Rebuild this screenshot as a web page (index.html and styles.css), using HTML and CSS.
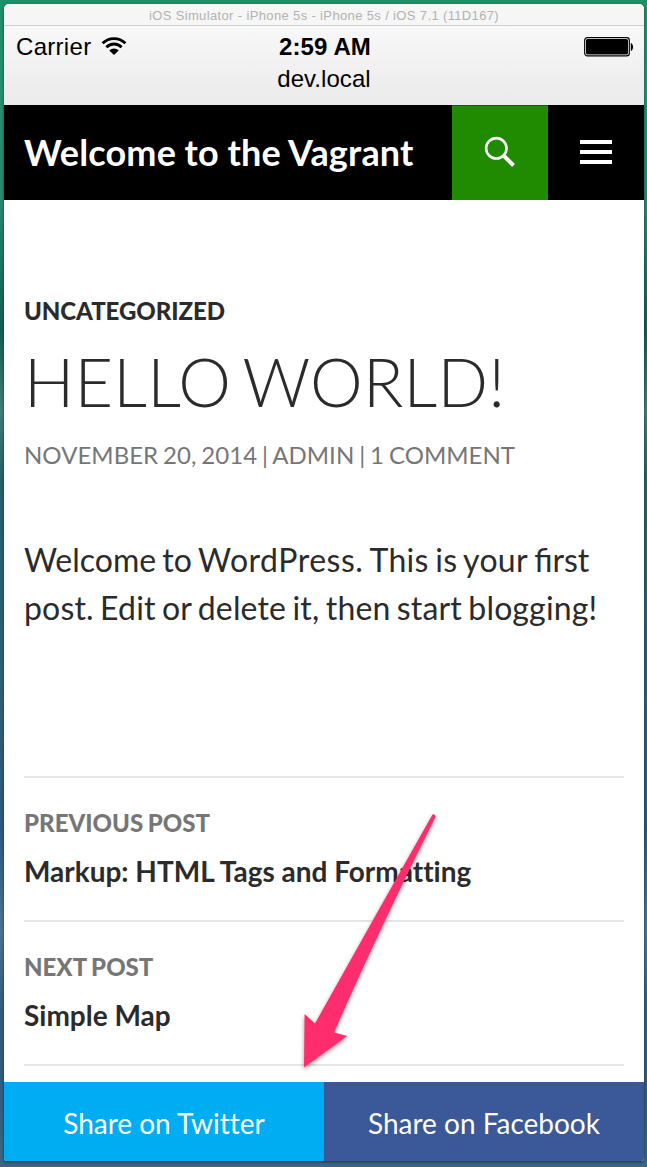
FILE: index.html
```html
<!DOCTYPE html>
<html lang="en">
<head>
<meta charset="utf-8">
<title>Welcome to the Vagrant</title>
<link rel="stylesheet" href="styles.css">
</head>
<body>
<div class="window">
  <div class="titlebar"><span class="titlebar-text">iOS Simulator - iPhone 5s - iPhone 5s / iOS 7.1 (11D167)</span></div>
  <div class="safari">
    <div class="status">
      <div class="carrier"><span class="carrier-name">Carrier</span>
        <svg class="wifi" width="26" height="20" viewBox="0 0 26 20"><g fill="none" stroke="#000" stroke-width="2.9"><path d="M1.6 7.3a16.2 16.2 0 0 1 22.8 0"/><path d="M5.4 11.2a10.8 10.8 0 0 1 15.2 0"/></g><path d="M8.3 14.4a6.6 6.6 0 0 1 9.4 0L13 19z"/></svg>
      </div>
      <span class="time">2:59 AM</span>
      <svg class="battery" width="50" height="20" viewBox="0 0 50 20"><rect x=".7" y=".7" width="44.6" height="18.2" rx="2.6" fill="#fff" stroke="#000" stroke-width="1.2"/><rect x="2" y="2" width="42" height="15.6" rx="1.5"/><path d="M46.8 6c3 1 3 7 0 8z"/></svg>
    </div>
    <div class="address"><span class="host">dev.local</span></div>
  </div>
  <header class="header">
    <h1 class="site-title"><span class="site-name">Welcome to the Vagrant</span></h1>
    <div class="search"><svg width="34" height="34" viewBox="0 0 34 34" fill="none" stroke="#fff"><circle cx="13.3" cy="13.3" r="10.2" stroke-width="2.6"/><path d="M20.5 20.5L30.500 30.500" stroke-width="4"/></svg></div>
    <div class="menu"><i class="bar"></i><i class="bar"></i><i class="bar"></i></div>
  </header>
  <main class="content">
    <div class="category"><span class="cat-text">UNCATEGORIZED</span></div>
    <h2 class="entry-title"><span class="entry-text">HELLO WORLD!</span></h2>
    <div class="meta"><span class="meta-text">NOVEMBER 20, 2014 | ADMIN | 1 COMMENT</span></div>
    <p class="copy"><span class="copy-one">Welcome to <span class="brand">WordPress.</span> <span class="loose">This is your</span> first</span><br><span class="copy-two">post. Edit or delete it, then start blogging!</span></p>
    <nav class="posts">
      <a class="post"><span class="label">PREVIOUS POST</span><span class="post-title">Markup: HTML Tags and Formatting</span></a>
      <a class="post"><span class="label">NEXT POST</span><span class="post-title">Simple Map</span></a>
    </nav>
  </main>
  <footer class="share">
    <a class="share-button twitter"><span class="share-text">Share on Twitter</span></a>
    <a class="share-button facebook"><span class="share-text">Share on Facebook</span></a>
  </footer>
</div>
<svg class="arrow" width="150" height="265" viewBox="0 0 150 265"><path d="M142.5 4.5Q143.800 3.900 144.800 5Q146 6 145 8Q88 122 44 222.500L57.300 226L14 257.500L14.600 204L25 213.500Q84 108 142.500 4.500Z" fill="#ff2d6e"/></svg>
</body>
</html>
```
FILE: styles.css
```css
* { box-sizing: border-box; }
body {
  margin: 0;
  height: 1167px;
  padding: 4px 3px 6px 4px;
  overflow: hidden;
  position: relative;
  font-family: Lato, sans-serif;
  color: #2b2b2b;
  background: linear-gradient(#1c9168 0, #239070 90px, #278a70 200px, #125e55 330px, #427d78 410px, #285f69 480px, #2e6075 700px, #2a5982 830px, #4a7398 930px, #315d80 1010px, #365d7e 1100px, #3b6683 1167px);
}
.window {
  width: 640px;
  height: 1157px;
  display: flex;
  flex-direction: column;
  overflow: hidden;
  border-radius: 5px 5px 3px 3px;
  background: #fff;
  box-shadow: 0 1px 3px rgba(0, 0, 0, .5);
}
.titlebar {
  height: 22px;
  flex: none;
  border-bottom: 1px solid #cfcfcf;
  background: #f6f6f6;
  color: #b2b2b2;
  text-align: center;
  font: 13px/23px "Liberation Sans", Arial, sans-serif;
  letter-spacing: .36px;
}
.safari {
  height: 79px;
  flex: none;
  background: linear-gradient(#f8f8f8, #eaeaea);
  color: #000;
  font: 24px/32px "Liberation Sans", Arial, sans-serif;
}
.status {
  height: 37px;
  padding: 5px 10px 0 12px;
  display: grid;
  grid-template-columns: 1fr auto 1fr;
}
.carrier { display: flex; gap: 10px; }
.carrier-name { letter-spacing: .3px; }
.wifi { margin-top: 5px; }
.time { font-weight: bold; letter-spacing: .1px; }
.battery { justify-self: end; margin-top: 6px; }
.address { text-align: center; letter-spacing: .05px; }
.header {
  height: 95px;
  flex: none;
  display: flex;
  background: #000;
}
.site-title {
  flex: 1;
  margin: 0;
  padding-left: 20px;
  color: #fff;
  font-size: 36px;
  line-height: 94px;
  font-weight: 700;
  letter-spacing: .17px;
  word-spacing: -.4px;
  white-space: nowrap;
}
.search {
  width: 96px;
  padding: 29px 0 0 31px;
  background: #208b00;
  border-top: 1px solid #165f00;
}
.menu {
  width: 96px;
  padding: 35px 32px 0;
  display: flex;
  flex-direction: column;
  gap: 6px;
}
.bar { height: 4px; background: #fff; }
.content {
  flex: 1;
  padding: 95px 20px 0;
  white-space: nowrap;
}
.category {
  font-size: 24px;
  line-height: 32px;
  font-weight: 900;
  letter-spacing: -.06px;
}
.entry-title {
  margin: 18px 0 0;
  font-size: 66.6px;
  line-height: 72px;
  font-weight: 300;
  letter-spacing: .2px;
  word-spacing: -5.5px;
}
.meta {
  margin-top: 22px;
  color: #767676;
  font-size: 24px;
  line-height: 32px;
  word-spacing: -1.3px;
  letter-spacing: .04px;
}
.copy {
  margin: 65px 0 0;
  font-size: 32px;
  line-height: 48px;
  word-spacing: -2px;
}
.brand { letter-spacing: .5px; }
.loose { letter-spacing: .3px; }
.copy-two { letter-spacing: .16px; }
.posts { margin-top: 144px; border-bottom: 2px solid #e5e5e5; }
.post {
  height: 144px;
  padding-top: 21px;
  display: flex;
  flex-direction: column;
  border-top: 2px solid #e5e5e5;
}
.label {
  color: #767676;
  font-size: 24px;
  line-height: 48px;
  font-weight: 900;
  word-spacing: -1px;
}
.post-title {
  font-size: 28px;
  line-height: 48px;
  font-weight: 700;
  letter-spacing: -.01px;
}
.share { height: 79px; flex: none; display: flex; }
.share-button {
  flex: 1;
  color: #fff;
  text-align: center;
  font-size: 28px;
  line-height: 83px;
  letter-spacing: -.01px;
}
.twitter { background: #00acf2; }
.facebook { background: #3b5898; }
.arrow {
  position: absolute;
  left: 290px;
  top: 810px;
  filter: drop-shadow(0 2px 2px rgba(0, 0, 0, .4));
}
```
